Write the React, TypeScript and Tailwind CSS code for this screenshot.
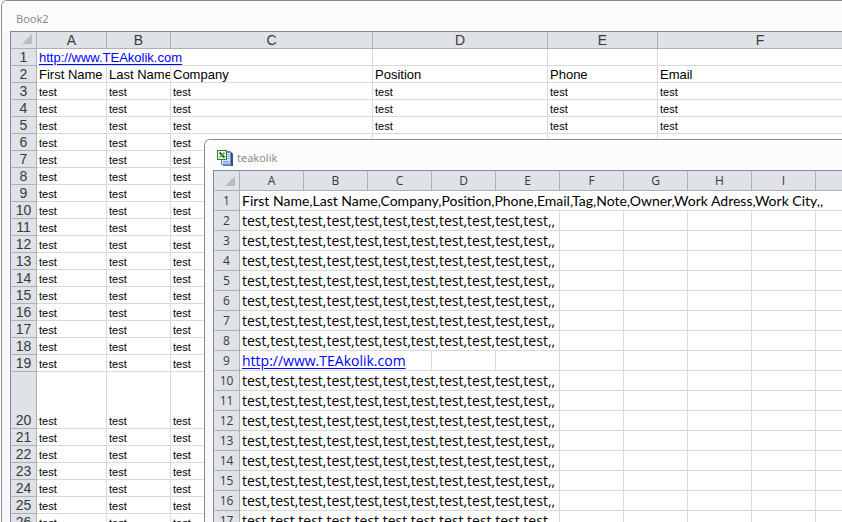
import type { ReactNode } from 'react'

interface Column {
  name: string
  width: string
}

interface Row {
  cells: ReactNode[]
  // how many columns the text of the first cell runs over
  span?: number
  height?: string
  text?: string
}

const SITE = 'http://www.TEAkolik.com'

const bookColumns: Column[] = [
  { name: 'A', width: 'w-[70px]' },
  { name: 'B', width: 'w-16' },
  { name: 'C', width: 'w-[202px]' },
  { name: 'D', width: 'w-[175px]' },
  { name: 'E', width: 'w-[110px]' },
  { name: 'F', width: 'w-[205px]' },
]

const csvColumns: Column[] = ['A', 'B', 'C', 'D', 'E', 'F', 'G', 'H', 'I', 'J'].map((name) => ({
  name,
  width: 'w-16',
}))

function SiteLink() {
  return (
    <a href={SITE} className="text-[#0000ff] underline underline-offset-2">
      {SITE}
    </a>
  )
}

const bookRows: Row[] = [
  { cells: [<SiteLink key="site" />], span: 3, text: 'text-[13px]' },
  { cells: ['First Name', 'Last Name', 'Company', 'Position', 'Phone', 'Email'], text: 'text-[13px]' },
  ...Array.from({ length: 24 }, (_, i) => ({
    cells: Array(i < 3 ? 6 : 3).fill('test'),
    // row 20 is the tall one
    height: i === 17 ? 'h-[57px]' : undefined,
  })),
]

const testLine = 'test,'.repeat(11) + ','

const csvRows: Row[] = [
  {
    cells: ['First Name,Last Name,Company,Position,Phone,Email,Tag,Note,Owner,Work Adress,Work City,,'],
    span: 10,
    text: "font-['Lato',sans-serif]",
  },
  ...Array.from({ length: 7 }, () => ({ cells: [testLine], span: 5 })),
  { cells: [<SiteLink key="site" />], span: 3 },
  ...Array.from({ length: 8 }, () => ({ cells: [testLine], span: 5 })),
]

function ExcelIcon() {
  return (
    <svg width="16" height="16" viewBox="0 0 16 16" aria-hidden="true">
      <path d="M6 1h7l3 3v12H6z" fill="#5f80b8" />
      <path d="M13 1l3 3v12h-2V3z" fill="#2f4f86" />
      <path d="M4.5 2.5h9v12h-9z" fill="#dce9fb" stroke="#6c8cc4" />
      <path d="M10.5 4.5h2M10.5 6.5h2M10.5 8.5h2M6 11.5h6.500M6 13h6.500" stroke="#7fa3dc" />
      <path d="M9 10.500v3.500" stroke="#9cb9e6" />
      <rect x="0.5" y="0.5" width="9" height="9" fill="#eef8ea" stroke="#2c7d27" />
      <path d="M2.500 2.500l5 5" stroke="#1d6b1a" strokeWidth="2" />
      <path d="M7.500 2.500l-5 5" stroke="#49a33f" strokeWidth="1.5" />
    </svg>
  )
}

function Sheet({
  label,
  columns,
  rows,
  rowHeight,
  headHeight,
  headText,
}: {
  label: string
  columns: Column[]
  rows: Row[]
  rowHeight: string
  headHeight: string
  headText: string
}) {
  return (
    <table aria-label={label} className="w-full table-fixed border-separate border-spacing-0">
      <thead>
        <tr className={headHeight}>
          <td className="w-[26px] border-r border-b border-[#adb1b7] bg-[#dfe2e7] p-0 pr-1 align-bottom">
            <svg width="10" height="10" viewBox="0 0 10 10" className="mb-1 ml-auto" aria-hidden="true">
              <path d="M10 0v10H0z" fill="#b9bdc3" />
            </svg>
          </td>
          {columns.map((c) => (
            <th
              key={c.name}
              scope="col"
              className={`${c.width} ${headText} border-r border-b border-[#adb1b7] bg-[#dfe2e7] p-0 align-bottom font-normal text-[#3a3a3a]`}
            >
              {c.name}
            </th>
          ))}
        </tr>
      </thead>
      <tbody>
        {rows.map((row, r) => {
          const span = row.span ?? 1
          return (
            <tr key={r} className={row.height ?? rowHeight}>
              <th
                scope="row"
                className={`${headText} border-r border-b border-[#adb1b7] bg-[#dfe2e7] p-0 align-bottom font-normal text-[#3a3a3a]`}
              >
                {r + 1}
              </th>
              {columns.slice(span - 1).map((c, i) => (
                <td
                  key={c.name}
                  colSpan={i === 0 ? span : 1}
                  className={`${row.text ?? ''} overflow-hidden border-r border-b border-[#d9dadb] p-0 pl-0.5 align-bottom whitespace-nowrap`}
                >
                  {row.cells[i]}
                </td>
              ))}
            </tr>
          )
        })}
      </tbody>
    </table>
  )
}

export default function App() {
  return (
    <main className="relative h-screen overflow-hidden bg-white text-black">
      <section className="ml-px h-full overflow-hidden rounded-tl-md border-t border-l border-[#868a92] bg-[#f8f8f9] font-['Liberation_Sans',Arial,sans-serif]">
        <header className="h-[30px] bg-[#fcfcfd] pt-2 pl-3.5 font-['Noto_Sans',sans-serif] text-[11px] leading-5 text-[#8c8c8c]">
          <h1>Book2</h1>
        </header>
        <div className="ml-2 border-t border-l border-[#868a92] bg-white text-[11px] leading-[14px]">
          <Sheet
            label="Book2"
            columns={bookColumns}
            rows={bookRows}
            rowHeight="h-[17px]"
            headHeight="h-[17px]"
            headText="text-[14px] leading-4"
          />
        </div>
      </section>

      <section className="absolute top-[139px] right-0 bottom-0 left-[204px] overflow-hidden rounded-tl-md border-t border-l border-[#868a92] bg-[#f8f8f9] font-['Open_Sans',sans-serif]">
        <header className="flex h-[30px] items-center gap-1 bg-[#fcfcfd] pt-1.5 pl-3 font-['Noto_Sans',sans-serif] text-[11px] leading-5 text-[#8c8c8c]">
          <ExcelIcon />
          <h2>teakolik</h2>
        </header>
        <div className="ml-2 border-t border-l border-[#868a92] bg-white text-[14px] leading-[18px]">
          <Sheet
            label="teakolik"
            columns={csvColumns}
            rows={csvRows}
            rowHeight="h-5"
            headHeight="h-5"
            headText="text-[12px] leading-[18px]"
          />
        </div>
      </section>
    </main>
  )
}
